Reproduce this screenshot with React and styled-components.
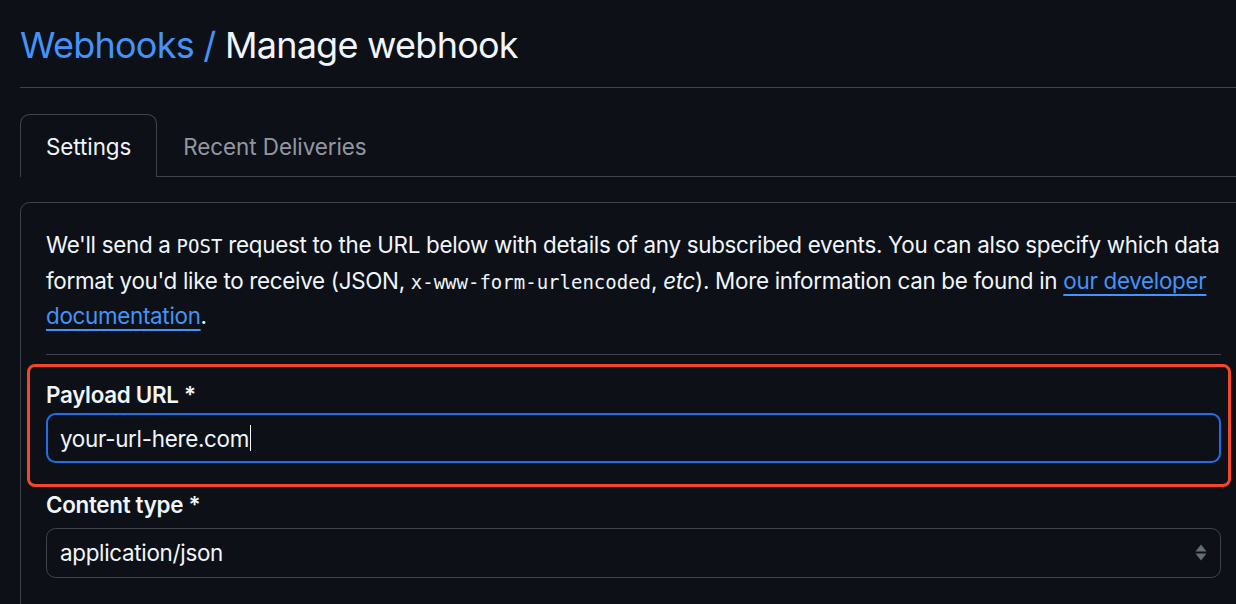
import React from 'react';
import styled, { createGlobalStyle } from 'styled-components';

const GlobalStyle = createGlobalStyle`
  body {
    margin: 0;
    background: #0d1117;
    color: #f0f6fc;
    font-family: Inter, "Noto Sans", sans-serif;
    letter-spacing: -0.3px;
    overflow: hidden;
  }
`;

// Layout
const Page = styled.div`
  padding-left: 20px;
  width: 1216px;
  height: 604px;
  overflow: hidden;
`;

const Heading = styled.h2`
  margin: 0;
  padding: 17px 0 12px;
  font-size: 36px;
  line-height: 57.6px;
  font-weight: 400;
  letter-spacing: -0.75px;
  border-bottom: 1px solid #3d444d;
`;

const Crumb = styled.a`
  color: #4493f8;
  text-decoration: none;
`;

const TabBar = styled.nav`
  display: flex;
  margin-top: 26px;
  border-bottom: 1px solid #3d444d;
`;

const Tab = styled.div`
  padding: 15px 25px 13px;
  font-size: 22.4px;
  line-height: 33.6px;
  letter-spacing: -0.05px;
  border: 1px solid transparent;
  border-bottom: 0;
  border-radius: 9.6px 9.6px 0 0;
  color: ${(p) => (p.$active ? '#f0f6fc' : '#9198a1')};
  ${(p) =>
    p.$active &&
    `
    border-color: #3d444d;
    background: #0d1117;
    margin-bottom: -1px;
  `}
`;

const Panel = styled.section`
  width: 1175px;
  margin-top: 25px;
  padding: 25px 25px 40px;
  border: 1px solid #3d444d;
  border-radius: 9.6px;
`;

const Intro = styled.p`
  margin: 0 0 22px;
  font-size: 22.4px;
  line-height: 33.4px;
`;

const Code = styled.code`
  font-family: "DejaVu Sans Mono", "Liberation Mono", monospace;
  font-size: 19px;
  letter-spacing: 0;
`;

const DocLink = styled.a`
  color: #4493f8;
  text-decoration: underline;
  text-decoration-thickness: 2px;
  text-underline-offset: 5px;
`;

const Divider = styled.hr`
  margin: 0;
  border: 0;
  border-top: 1px solid #3d444d;
`;

const FormGroup = styled.div`
  position: relative;
  margin-top: ${(p) => p.$top}px;
`;

const Highlight = styled.div`
  position: absolute;
  top: -14px;
  left: -19px;
  right: -10px;
  bottom: -24px;
  border: 3px solid #f4472a;
  border-radius: 8px;
  pointer-events: none;
`;

const Label = styled.label`
  display: block;
  font-size: 22.4px;
  line-height: 33.6px;
  font-weight: 600;
  margin-bottom: ${(p) => p.$gap}px;
`;

const Field = styled.div`
  box-sizing: border-box;
  display: flex;
  align-items: center;
  justify-content: space-between;
  height: 50px;
  padding: 0 13px 0 ${(p) => (p.$focused ? 12 : 13)}px;
  border: ${(p) => (p.$focused ? '2px solid #1f6feb' : '1px solid #3d444d')};
  border-radius: 9.6px;
  font-size: 22.4px;
  color: #f0f6fc;
`;

const Value = styled.span`
  display: flex;
  align-items: center;
`;

const Caret = styled.span`
  display: inline-block;
  width: 1.5px;
  height: 26px;
  margin-left: 1px;
  background: #f0f6fc;
`;

const SelectArrows = () => (
  <svg width="12" height="17" viewBox="0 0 12 17">
    <path d="M6 0.5 L11.5 7.5 H0.5 Z" fill="#656c76" />
    <path d="M6 16.5 L11.5 9.5 H0.5 Z" fill="#656c76" />
  </svg>
);

const App = () => (
  <>
    <GlobalStyle />
    <Page>
      <Heading>
        <Crumb href="#">Webhooks</Crumb> <Crumb as="span">/</Crumb> Manage webhook
      </Heading>

      <TabBar>
        <Tab $active>Settings</Tab>
        <Tab>Recent Deliveries</Tab>
      </TabBar>

      <Panel>
        <Intro>
          We'll send a <Code>POST</Code> request to the URL below with details of any subscribed
          events. You can also specify which data format you'd like to receive (JSON,{' '}
          <Code>x-www-form-urlencoded</Code>, <em>etc</em>). More information can be found in{' '}
          <DocLink href="#">our developer documentation</DocLink>.
        </Intro>
        <Divider />

        <FormGroup $top={23}>
          <Highlight />
          <Label $gap={1}>Payload URL *</Label>
          <Field $focused>
            <Value>
              your-url-here.com
              <Caret />
            </Value>
          </Field>
        </FormGroup>

        <FormGroup $top={25}>
          <Label $gap={6}>Content type *</Label>
          <Field>
            <Value>application/json</Value>
            <SelectArrows />
          </Field>
        </FormGroup>
      </Panel>
    </Page>
  </>
);

export default App;
